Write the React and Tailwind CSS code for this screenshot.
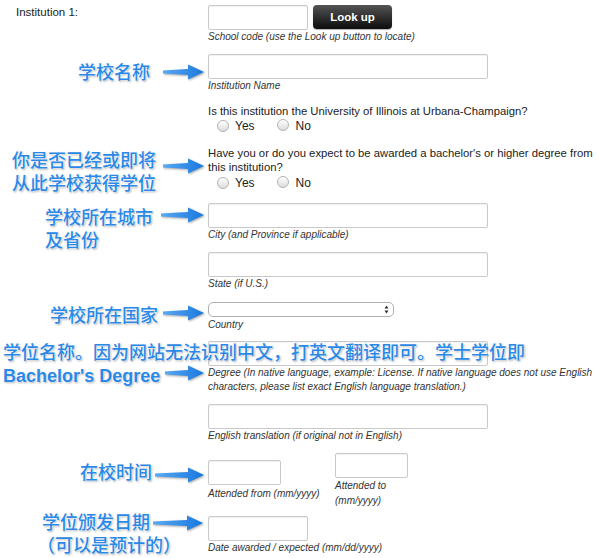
import React, { useId } from "react";

const sans = { fontFamily: '"Liberation Sans", Arial, sans-serif' };

const Arrow = ({ x, cy, w = 43 }) => {
  const id = useId();
  const b = w - 17;
  return (
    <svg
      className="absolute drop-shadow-[1px_1px_1px_rgba(0,0,0,0.35)]"
      style={{ left: x, top: cy - 9 }}
      width={w}
      height="18"
      viewBox={`0 0 ${w} 18`}
    >
      <defs>
        <linearGradient id={id} x1="0" y1="0" x2="1" y2="0">
          <stop offset="0" stopColor="#5aa9f2" />
          <stop offset="1" stopColor="#1877de" />
        </linearGradient>
      </defs>
      <path
        d={`M1 7.5 L${b} 6 L${b} 1.5 L${w - 1} 9 L${b} 16.5 L${b} 12 L1 10.5 Z`}
        fill={`url(#${id})`}
      />
    </svg>
  );
};

const Note = ({ x, top, children, className = "" }) => (
  <div
    className={
      "absolute whitespace-nowrap text-[18px] leading-[23px] font-medium text-[#2a88e6] [text-shadow:0_0_1px_#fff,0_0_2px_#fff,0_0_3px_#fff,1px_1px_2px_rgba(0,0,0,0.45)] " +
      className
    }
    style={{ left: x, top, fontFamily: '"Noto Sans CJK SC", "Liberation Sans", sans-serif' }}
  >
    {children}
  </div>
);

const Input = ({ w = "w-[280px]", className = "" }) => (
  <div className={`${w} h-[25px] bg-white border border-[#c9c9c9] rounded-[2px] shadow-[inset_0_1px_1px_rgba(0,0,0,0.06)] ${className}`} />
);

const Caption = ({ children, className = "" }) => (
  <div className={`text-[10px] leading-[13px] italic text-[#333] ${className}`}>{children}</div>
);

const Radio = () => (
  <span className="inline-block w-[12px] h-[12px] rounded-full border border-[#b3b3b3] bg-gradient-to-b from-[#ffffff] to-[#dcdcdc]" />
);

const YesNo = ({ className = "" }) => (
  <div className={`flex items-center h-[16px] ml-[9px] text-[12px] text-[#222] ${className}`}>
    <Radio />
    <span className="ml-[6px]">Yes</span>
    <span className="ml-[22px]">
      <Radio />
    </span>
    <span className="ml-[7px]">No</span>
  </div>
);

export default function App() {
  return (
    <div className="relative w-[599px] h-[558px] bg-white overflow-hidden text-[#222]" style={sans}>
      <div className="flex">
        <div className="w-[208px] pl-4 pt-[5px] text-[11.5px] leading-[14px]">Institution 1:</div>

        <div className="flex flex-col w-[391px] pt-[5px] text-[11.3px] leading-[14px]">
          <div className="flex items-start">
            <Input w="w-[100px]" />
            <button className="ml-[5px] w-[79px] h-[24px] rounded-[4px] bg-gradient-to-b from-[#555555] to-[#0e0e0e] text-white font-bold text-[11.5px] shadow-[0_1px_1px_rgba(0,0,0,0.3)]">
              Look up
            </button>
          </div>
          <Caption>School code (use the Look up button to locate)</Caption>

          <Input className="mt-[11px]" />
          <Caption>Institution Name</Caption>

          <div className="mt-[12px]">Is this institution the University of Illinois at Urbana-Champaign?</div>
          <YesNo />

          <div className="mt-[12px] w-[385px]">
            Have you or do you expect to be awarded a bachelor's or higher degree from this institution?
          </div>
          <YesNo className="mt-[1px]" />

          <Input className="mt-[12px]" />
          <Caption>City (and Province if applicable)</Caption>

          <Input className="mt-[11px]" />
          <Caption>State (if U.S.)</Caption>

          <div className="mt-[12px] w-[186px] h-[15px] border border-[#b0b0b0] rounded-[5px] bg-white flex items-center justify-end pr-[4px]">
            <svg width="5" height="9" viewBox="0 0 5 9">
              <path d="M2.5 0.5 L4.5 3.5 L0.5 3.5 Z M2.5 8.5 L4.5 5.5 L0.5 5.5 Z" fill="#333" />
            </svg>
          </div>
          <Caption className="mt-[1px]">Country</Caption>

          <Input className="mt-[10px]" />
          <div className="text-[10px] leading-[14px] italic text-[#333]">
            Degree (In native language, example: License. If native language does not use English characters, please list exact English language translation.)
          </div>

          <Input className="mt-[10px]" />
          <Caption>English translation (if original not in English)</Caption>

          <div className="flex items-start">
            <div className="w-[127px] mt-[18px]">
              <Input w="w-[73px]" />
              <Caption className="mt-[2px]">Attended from (mm/yyyy)</Caption>
            </div>
            <div className="w-[80px] mt-[11px]">
              <Input w="w-[73px]" />
              <div className="text-[10px] leading-[15px] italic text-[#333]">Attended to (mm/yyyy)</div>
            </div>
          </div>

          <Input w="w-[100px]" className="mt-[8px]" />
          <Caption>Date awarded / expected (mm/dd/yyyy)</Caption>
        </div>
      </div>

      {/* annotations */}
      <Note x={78} top={60}>学校名称</Note>
      <Arrow x={162} cy={72} />

      <Note x={12} top={148}>
        你是否已经或即将
        <br />
        从此学校获得学位
      </Note>
      <Arrow x={162} cy={166} />

      <Note x={45} top={205}>
        学校所在城市
        <br />
        及省份
      </Note>
      <Arrow x={160} cy={215} w={45} />

      <Note x={50} top={303}>学校所在国家</Note>
      <Arrow x={162} cy={313} />

      <Note x={3} top={340}>
        学位名称。因为网站无法识别中文，打英文翻译即可。学士学位即
        <br />
        <span className="font-bold" style={sans}>Bachelor's Degree</span>
      </Note>
      <Arrow x={164} cy={373} w={41} />

      <Note x={80} top={460}>在校时间</Note>
      <Arrow x={154} cy={475} w={51} />

      <Note x={42} top={510}>
        学位颁发日期
        <br />
        <span className="-ml-[5px]">（可以是预计的）</span>
      </Note>
      <Arrow x={152} cy={523} w={52} />
    </div>
  );
}
